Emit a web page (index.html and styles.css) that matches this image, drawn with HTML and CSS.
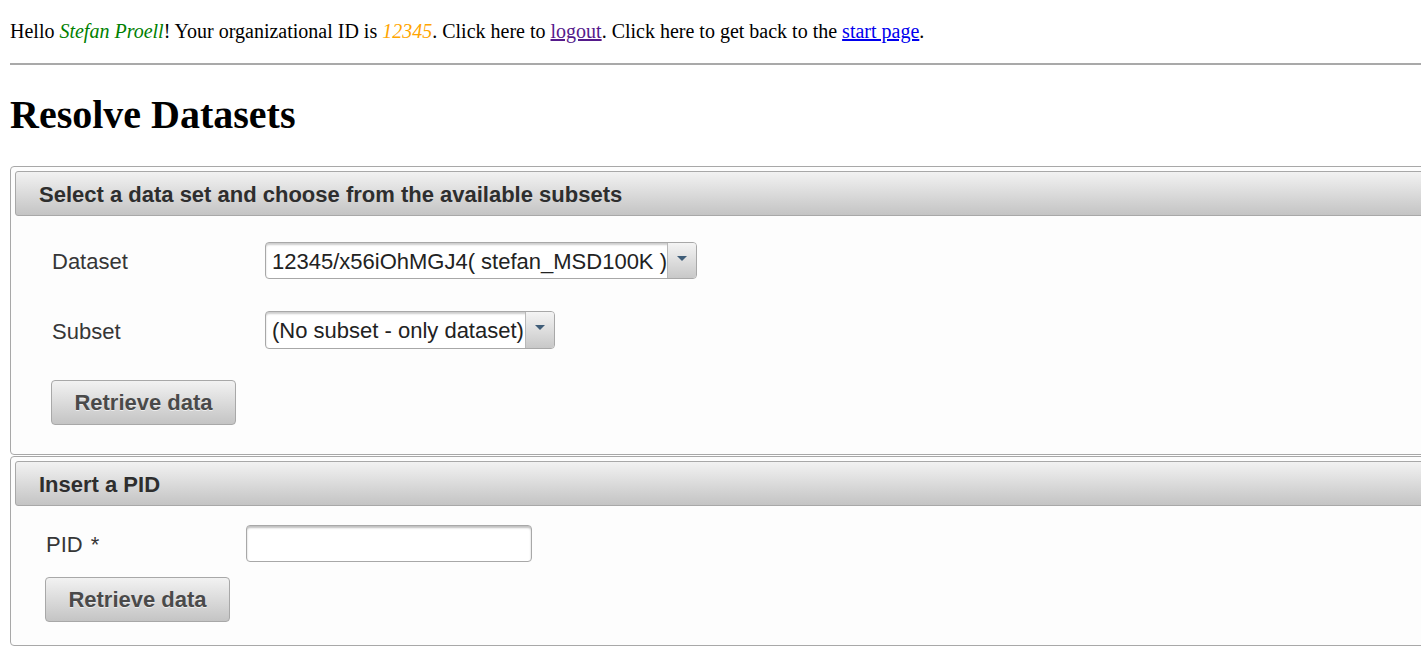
FILE: index.html
```html
<!DOCTYPE html>
<html>
<head>
<meta charset="utf-8">
<title>Resolve Datasets</title>
<link rel="stylesheet" href="styles.css">
</head>
<body>
<div class="page">
  <div class="greeting">Hello <em class="name">Stefan Proell</em>! Your organizational ID is <em class="org">12345</em>. Click here to <a class="visited" href="#">logout</a>. Click here to get back to the <a class="link" href="#">start page</a>.</div>
  <hr class="rule">
  <h1 class="title">Resolve Datasets</h1>

  <div class="panel">
    <div class="panel-header">Select a data set and choose from the available subsets</div>
    <div class="panel-body panel-body-select">
      <div class="form-grid grid-select">
        <label class="field-label">Dataset</label>
        <div class="dropdown dropdown-wide">
          <span class="dropdown-value">12345/x56iOhMGJ4( stefan_MSD100K )</span>
          <span class="dropdown-trigger"><span class="caret"></span></span>
        </div>
        <label class="field-label">Subset</label>
        <div class="dropdown dropdown-narrow">
          <span class="dropdown-value">(No subset - only dataset)</span>
          <span class="dropdown-trigger"><span class="caret"></span></span>
        </div>
      </div>
      <button class="btn" type="button">Retrieve data</button>
    </div>
  </div>

  <div class="panel panel-second">
    <div class="panel-header">Insert a PID</div>
    <div class="panel-body panel-body-pid">
      <div class="form-grid grid-pid">
        <label class="field-label">PID <span class="required">*</span></label>
        <input class="text-input" type="text">
      </div>
      <button class="btn" type="button">Retrieve data</button>
    </div>
  </div>
</div>
</body>
</html>
```

FILE: styles.css
```css
html {
  overflow: hidden;
}
body {
  margin: 0;
  background: #ffffff;
  font-family: "Liberation Serif", "Times New Roman", serif;
  font-size: 20px;
  color: #000;
}
.page {
  padding: 0 0 0 10px;
  width: 1440px;
}
.greeting {
  padding-top: 20px;
  line-height: 23px;
}
.name {
  color: #008000;
}
.org {
  color: #ffa500;
}
.visited {
  color: #551a8b;
}
.link {
  color: #0000ee;
}
.rule {
  margin: 20px 0 0 0;
  width: 1411px;
  height: 0;
  border: 0;
  border-top: 2px solid #a9a9a9;
}
.title {
  margin: 27px 0 28px 0;
  font-size: 40px;
  line-height: 46px;
  font-weight: bold;
}
.panel {
  border: 1px solid #a8a8a8;
  border-radius: 4px;
  padding: 4px;
  background: #fdfdfd;
  width: 1420px;
  font-family: "Liberation Sans", Arial, sans-serif;
}
.panel-second {
  margin-top: 1px;
}
.panel-header {
  height: 41px;
  line-height: 41px;
  padding-top: 2px;
  border: 1px solid #a8a8a8;
  border-radius: 3px;
  background: linear-gradient(to bottom, #f2f2f2, #c4c4c4);
  padding-left: 23px;
  font-size: 22px;
  font-weight: bold;
  color: #2e2e2e;
}
.panel-body-select {
  padding: 26px 0 25px 36px;
}
.panel-body-pid {
  padding: 19px 0 19px 30px;
}
.form-grid {
  display: grid;
  align-items: center;
}
.grid-select {
  grid-template-columns: 214px max-content;
  row-gap: 32px;
  margin-bottom: 31px;
}
.grid-pid {
  grid-template-columns: 201px max-content;
  margin-bottom: 15px;
}
.field-label {
  font-size: 22px;
  color: #363636;
  padding-left: 1px;
  padding-top: 3px;
}
.required {
  margin-left: 2px;
}
.dropdown {
  display: flex;
  height: 37px;
  border: 1px solid #a8a8a8;
  border-radius: 4px;
  background: #ffffff;
  box-shadow: inset 0 2px 2px rgba(0, 0, 0, 0.2);
  box-sizing: border-box;
  overflow: hidden;
}
.dropdown-wide {
  width: 432px;
}
.dropdown-narrow {
  width: 290px;
  height: 38px;
}
.dropdown-value {
  flex: 1;
  padding-left: 6px;
  font-size: 22px;
  line-height: 37px;
  color: #222;
  white-space: nowrap;
  overflow: hidden;
}
.dropdown-trigger {
  flex: none;
  width: 29px;
  border-left: 1px solid #b8b8b8;
  background: linear-gradient(to bottom, #f4f4f4, #c8c8c8);
  display: flex;
  justify-content: center;
  padding-top: 13px;
  box-sizing: border-box;
}
.caret {
  width: 0;
  height: 0;
  border-left: 5px solid transparent;
  border-right: 5px solid transparent;
  border-top: 5px solid #3f5d78;
}
.btn {
  display: block;
  width: 185px;
  height: 45px;
  border: 1px solid #a8a8a8;
  border-radius: 4px;
  background: linear-gradient(to bottom, #f2f2f2, #c4c4c4);
  font-family: "Liberation Sans", Arial, sans-serif;
  font-size: 22px;
  font-weight: bold;
  color: #4a4a4a;
  text-shadow: 0 1px 0 rgba(255, 255, 255, 0.6);
  padding: 0;
}
.text-input {
  width: 286px;
  height: 37px;
  box-sizing: border-box;
  border: 1px solid #a8a8a8;
  border-radius: 4px;
  box-shadow: inset 0 2px 2px rgba(0, 0, 0, 0.25);
  background: #ffffff;
  margin: 0;
  font-size: 22px;
}
```
